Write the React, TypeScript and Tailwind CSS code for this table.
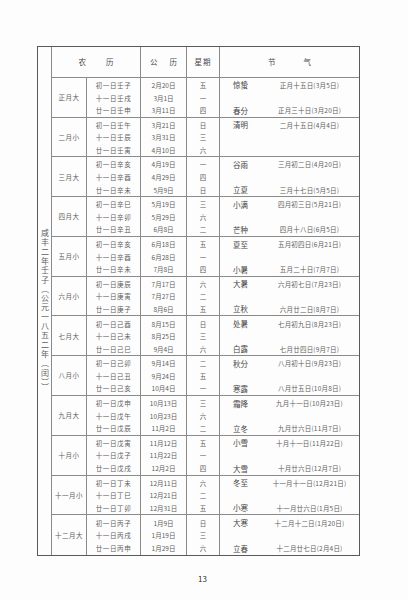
import React from 'react';

type Row = [string, string, string];
type Term = [string, string] | null;

interface Month {
  name: string;
  rows: Row[];
  terms: Term[];
}

const MONTHS: Month[] = [
  {
    name: '正月大',
    rows: [
      ['初一日壬子', '2月20日', '五'],
      ['十一日壬戌', '3月1日', '一'],
      ['廿一日壬申', '3月11日', '四'],
    ],
    terms: [['惊蛰', '正月十五日(3月5日)'], null, ['春分', '正月三十日(3月20日)']],
  },
  {
    name: '二月小',
    rows: [
      ['初一日壬午', '3月21日', '日'],
      ['十一日壬辰', '3月31日', '三'],
      ['廿一日壬寅', '4月10日', '六'],
    ],
    terms: [['清明', '二月十五日(4月4日)'], null, null],
  },
  {
    name: '三月大',
    rows: [
      ['初一日辛亥', '4月19日', '一'],
      ['十一日辛酉', '4月29日', '四'],
      ['廿一日辛未', '5月9日', '日'],
    ],
    terms: [['谷雨', '三月初二日(4月20日)'], null, ['立夏', '三月十七日(5月5日)']],
  },
  {
    name: '四月大',
    rows: [
      ['初一日辛巳', '5月19日', '三'],
      ['十一日辛卯', '5月29日', '六'],
      ['廿一日辛丑', '6月8日', '二'],
    ],
    terms: [['小满', '四月初三日(5月21日)'], null, ['芒种', '四月十八日(6月5日)']],
  },
  {
    name: '五月小',
    rows: [
      ['初一日辛亥', '6月18日', '五'],
      ['十一日辛酉', '6月28日', '一'],
      ['廿一日辛未', '7月8日', '四'],
    ],
    terms: [['夏至', '五月初四日(6月21日)'], null, ['小暑', '五月二十日(7月7日)']],
  },
  {
    name: '六月小',
    rows: [
      ['初一日庚辰', '7月17日', '六'],
      ['十一日庚寅', '7月27日', '二'],
      ['廿一日庚子', '8月6日', '五'],
    ],
    terms: [['大暑', '六月初七日(7月23日)'], null, ['立秋', '六月廿二日(8月7日)']],
  },
  {
    name: '七月大',
    rows: [
      ['初一日己酉', '8月15日', '日'],
      ['十一日己未', '8月25日', '三'],
      ['廿一日己巳', '9月4日', '六'],
    ],
    terms: [['处暑', '七月初九日(8月23日)'], null, ['白露', '七月廿四日(9月7日)']],
  },
  {
    name: '八月小',
    rows: [
      ['初一日己卯', '9月14日', '二'],
      ['十一日己丑', '9月24日', '五'],
      ['廿一日己亥', '10月4日', '一'],
    ],
    terms: [['秋分', '八月初十日(9月23日)'], null, ['寒露', '八月廿五日(10月8日)']],
  },
  {
    name: '九月大',
    rows: [
      ['初一日戊申', '10月13日', '三'],
      ['十一日戊午', '10月23日', '六'],
      ['廿一日戊辰', '11月2日', '二'],
    ],
    terms: [['霜降', '九月十一日(10月23日)'], null, ['立冬', '九月廿六日(11月7日)']],
  },
  {
    name: '十月小',
    rows: [
      ['初一日戊寅', '11月12日', '五'],
      ['十一日戊子', '11月22日', '一'],
      ['廿一日戊戌', '12月2日', '四'],
    ],
    terms: [['小雪', '十月十一日(11月22日)'], null, ['大雪', '十月廿六日(12月7日)']],
  },
  {
    name: '十一月小',
    rows: [
      ['初一日丁未', '12月11日', '六'],
      ['十一日丁巳', '12月21日', '二'],
      ['廿一日丁卯', '12月31日', '五'],
    ],
    terms: [['冬至', '十一月十一日(12月21日)'], null, ['小寒', '十一月廿六日(1月5日)']],
  },
  {
    name: '十二月大',
    rows: [
      ['初一日丙子', '1月9日', '日'],
      ['十一日丙戌', '1月19日', '三'],
      ['廿一日丙申', '1月29日', '六'],
    ],
    terms: [['大寒', '十二月十二日(1月20日)'], null, ['立春', '十二月廿七日(2月4日)']],
  },
];

function MonthGroup({ month, last }: { month: Month; last: boolean }) {
  return (
    <div className={`flex h-[39.9px] ${last ? '' : 'border-b border-[#8a8a8a]'}`}>
      <div className="w-[35px] border-r border-[#8a8a8a] flex items-center justify-center text-[6.5px] tracking-[0.5px]">
        {month.name}
      </div>
      <div className="w-[54px] border-r border-[#8a8a8a] flex flex-col pt-[1px]">
        {month.rows.map((r) => (
          <div key={r[0]} className="flex-1 flex items-center justify-center tracking-[0.6px]">
            {r[0]}
          </div>
        ))}
      </div>
      <div className="w-[46px] border-r border-[#8a8a8a] flex flex-col pt-[1px]">
        {month.rows.map((r) => (
          <div key={r[1]} className="flex-1 flex items-center justify-center">
            {r[1]}
          </div>
        ))}
      </div>
      <div className="w-[33px] border-r border-[#8a8a8a] flex flex-col pt-[1px]">
        {month.rows.map((r, i) => (
          <div key={i} className="flex-1 flex items-center justify-center">
            {r[2]}
          </div>
        ))}
      </div>
      <div className="flex-1 flex flex-col pt-[1px]">
        {month.terms.map((t, i) => (
          <div key={i} className="flex-1 flex items-center">
            {t && (
              <>
                <span className="w-[36px] pl-[13px] text-[7.5px] text-[#444]">{t[0]}</span>
                <span className="flex-1 text-center pl-[4px] tracking-[0.2px]">{t[1]}</span>
              </>
            )}
          </div>
        ))}
      </div>
    </div>
  );
}

export default function App() {
  return (
    <div
      className="w-[408px] h-[600px] bg-[#fdfdfd] text-[#5e5e5e] text-[6.5px] leading-none overflow-hidden"
      style={{ fontFamily: '"Noto Sans CJK SC", "Noto Sans", sans-serif' }}
    >
      <div className="pt-[46px] pl-[37px]">
        <div className="w-[323px] h-[510px] border-[1.5px] border-[#5a5a5a] flex">
          <div className="w-[14px] border-r border-[#8a8a8a] flex items-center justify-center pt-[20px]">
            <span className="[writing-mode:vertical-rl] text-[8px] tracking-[1.3px] text-[#5e5e5e]">
              咸丰二年壬子（公元一八五二年（闰））
            </span>
          </div>
          <div className="flex-1 flex flex-col">
            <div className="flex h-[31px] border-b border-[#8a8a8a] text-[7.5px] text-[#4a4a4a]">
              <div className="w-[89px] border-r border-[#8a8a8a] flex items-center justify-center gap-[20px]">
                <span>农</span>
                <span>历</span>
              </div>
              <div className="w-[46px] border-r border-[#8a8a8a] flex items-center justify-center gap-[12px]">
                <span>公</span>
                <span>历</span>
              </div>
              <div className="w-[33px] border-r border-[#8a8a8a] flex items-center justify-center tracking-[1px]">
                星期
              </div>
              <div className="flex-1 flex items-center justify-center gap-[28px]">
                <span>节</span>
                <span>气</span>
              </div>
            </div>
            {MONTHS.map((m, i) => (
              <MonthGroup key={m.name} month={m} last={i === MONTHS.length - 1} />
            ))}
          </div>
        </div>
        <div className="w-[323px] flex justify-center pt-[19px] pl-[8px] text-[8px] text-[#333]">13</div>
      </div>
    </div>
  );
}
